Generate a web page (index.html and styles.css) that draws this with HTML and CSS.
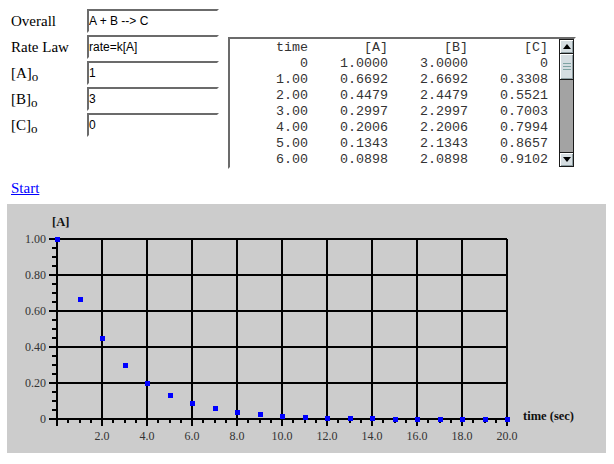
FILE: index.html
```html
<!DOCTYPE html>
<html>
<head>
<meta charset="utf-8">
<title>Kinetics</title>
<link rel="stylesheet" href="styles.css">
</head>
<body>
<div class="top">
  <div class="form">
    <label class="lbl">Overall</label><input class="field" value="A + B --&gt; C">
    <label class="lbl">Rate Law</label><input class="field" value="rate=k[A]">
    <label class="lbl">[A]<sub>o</sub></label><input class="field" value="1">
    <label class="lbl">[B]<sub>o</sub></label><input class="field" value="3">
    <label class="lbl">[C]<sub>o</sub></label><input class="field" value="0">
  </div>
  <div class="results">
    <div class="table">
      <div class="row"><span>time</span><span>[A]</span><span>[B]</span><span>[C]</span></div>
      <div class="row"><span>0</span><span>1.0000</span><span>3.0000</span><span>0</span></div>
      <div class="row"><span>1.00</span><span>0.6692</span><span>2.6692</span><span>0.3308</span></div>
      <div class="row"><span>2.00</span><span>0.4479</span><span>2.4479</span><span>0.5521</span></div>
      <div class="row"><span>3.00</span><span>0.2997</span><span>2.2997</span><span>0.7003</span></div>
      <div class="row"><span>4.00</span><span>0.2006</span><span>2.2006</span><span>0.7994</span></div>
      <div class="row"><span>5.00</span><span>0.1343</span><span>2.1343</span><span>0.8657</span></div>
      <div class="row"><span>6.00</span><span>0.0898</span><span>2.0898</span><span>0.9102</span></div>
    </div>
    <div class="sb">
      <div class="sb-btn up"><span class="tri-up"></span></div>
      <div class="sb-thumb"><span class="grip"></span></div>
      <div class="sb-track"></div>
      <div class="sb-btn down"><span class="tri-down"></span></div>
    </div>
  </div>
</div>
<div class="start"><a href="#">Start</a></div>
<div class="chart">
  <svg width="599" height="249" viewBox="7 204 599 249" xmlns="http://www.w3.org/2000/svg">
    <g stroke="#000" stroke-width="2" fill="none" shape-rendering="crispEdges">
      <path d="M57 239V426M102 239V426M147 239V426M192 239V426M237 239V426M282 239V426M327 239V426M372 239V426M417 239V426M462 239V426M507 239V426"/>
      <path d="M49 239H507M49 275H507M49 311H507M49 347H507M49 383H507M49 419H507"/>
      <path d="M52 248H57M52 257H57M52 266H57M52 284H57M52 293H57M52 302H57M52 320H57M52 329H57M52 338H57M52 356H57M52 365H57M52 374H57M52 392H57M52 401H57M52 410H57"/>
      <path d="M68 419V423M80 419V423M91 419V423M113 419V423M125 419V423M136 419V423M158 419V423M170 419V423M181 419V423M203 419V423M215 419V423M226 419V423M248 419V423M260 419V423M271 419V423M293 419V423M305 419V423M316 419V423M338 419V423M350 419V423M361 419V423M383 419V423M395 419V423M406 419V423M428 419V423M440 419V423M451 419V423M473 419V423M485 419V423M496 419V423"/>
    </g>
    <g fill="#0000ff" shape-rendering="crispEdges">
      <rect x="55" y="237" width="5" height="5"/>
      <rect x="78" y="297" width="5" height="5"/>
      <rect x="100" y="336" width="5" height="5"/>
      <rect x="123" y="363" width="5" height="5"/>
      <rect x="145" y="381" width="5" height="5"/>
      <rect x="168" y="393" width="5" height="5"/>
      <rect x="190" y="401" width="5" height="5"/>
      <rect x="213" y="406" width="5" height="5"/>
      <rect x="235" y="410" width="5" height="5"/>
      <rect x="258" y="412" width="5" height="5"/>
      <rect x="280" y="414" width="5" height="5"/>
      <rect x="303" y="415" width="5" height="5"/>
      <rect x="325" y="416" width="5" height="5"/>
      <rect x="348" y="416" width="5" height="5"/>
      <rect x="370" y="416" width="5" height="5"/>
      <rect x="393" y="417" width="5" height="5"/>
      <rect x="415" y="417" width="5" height="5"/>
      <rect x="438" y="417" width="5" height="5"/>
      <rect x="460" y="417" width="5" height="5"/>
      <rect x="483" y="417" width="5" height="5"/>
      <rect x="505" y="417" width="5" height="5"/>
    </g>
    <g class="tick-lbl" text-anchor="end">
      <text x="46" y="243">1.00</text>
      <text x="46" y="279">0.80</text>
      <text x="46" y="315">0.60</text>
      <text x="46" y="351">0.40</text>
      <text x="46" y="387">0.20</text>
      <text x="46" y="423">0</text>
    </g>
    <g class="tick-lbl" text-anchor="middle">
      <text x="102" y="440">2.0</text>
      <text x="147" y="440">4.0</text>
      <text x="192" y="440">6.0</text>
      <text x="237" y="440">8.0</text>
      <text x="282" y="440">10.0</text>
      <text x="327" y="440">12.0</text>
      <text x="372" y="440">14.0</text>
      <text x="417" y="440">16.0</text>
      <text x="462" y="440">18.0</text>
      <text x="507" y="440">20.0</text>
    </g>
    <text class="axis-title" x="52" y="226">[A]</text>
    <text class="axis-title" x="523" y="420">time (sec)</text>
  </svg>
</div>
</body>
</html>
```
FILE: styles.css
```css
body {
  margin: 0;
  background: #fff;
  color: #000;
  font-family: "Liberation Serif", "Times New Roman", serif;
  font-size: 15px;
}

.top {
  display: flex;
  align-items: flex-start;
  padding: 9px 0 0 11px;
}

.form {
  display: grid;
  grid-template-columns: 76px 132px;
  grid-auto-rows: 24px;
  row-gap: 2px;
  align-items: center;
}

.lbl {
  font-size: 15px;
  line-height: 18px;
}

.lbl sub {
  font-size: 13px;
  line-height: 0;
  vertical-align: -3px;
}

.field {
  box-sizing: border-box;
  width: 132px;
  height: 24px;
  margin: 0;
  padding: 0;
  border: 2px solid;
  border-color: #6b6b6b #fff #fff #6b6b6b;
  background: #fff;
  color: #000;
  font: 12px "Liberation Sans", Arial, sans-serif;
  outline: none;
}

.results {
  box-sizing: border-box;
  display: flex;
  width: 348px;
  height: 132px;
  margin: 28px 0 0 9px;
  border: 2px solid;
  border-color: #6b6b6b #fff #fff #6b6b6b;
}

.table {
  flex: 1;
  padding-top: 1px;
  font-family: "Liberation Mono", "Courier New", monospace;
  font-size: 13.33px;
  line-height: 16px;
  color: #333;
}

.row {
  display: grid;
  grid-template-columns: 78px 80px 80px 80px;
  text-align: right;
  white-space: pre;
}

.sb {
  box-sizing: border-box;
  display: flex;
  flex-direction: column;
  width: 15px;
  background: #a3a3a3;
  border: 1px solid #1a1a1a;
}

.sb-btn {
  box-sizing: border-box;
  height: 14px;
  display: flex;
  align-items: center;
  justify-content: center;
  background: #d5dde1;
  box-shadow: inset 1px 1px #fff, inset -1px -1px #8e9ea2;
}

.sb-btn.up {
  border-bottom: 1px solid #1a1a1a;
}

.sb-btn.down {
  border-top: 1px solid #1a1a1a;
}

.sb-thumb {
  box-sizing: border-box;
  height: 26px;
  display: flex;
  align-items: center;
  justify-content: center;
  background: #d5dde1;
  border-bottom: 1px solid #1a1a1a;
  box-shadow: inset 1px 1px #fff, inset -1px -1px #8e9ea2;
}

.sb-track {
  flex: 1;
}

.grip {
  width: 8px;
  height: 7px;
  background: repeating-linear-gradient(to bottom, #7fa3a3 0 1px, transparent 1px 3px);
}

.tri-up {
  width: 0;
  height: 0;
  border-left: 4px solid transparent;
  border-right: 4px solid transparent;
  border-bottom: 5px solid #000;
}

.tri-down {
  width: 0;
  height: 0;
  border-left: 4px solid transparent;
  border-right: 4px solid transparent;
  border-top: 5px solid #000;
}

.start {
  margin: 10px 0 0 11px;
  line-height: 18px;
  font-size: 15px;
}

.start a {
  color: #0000ff;
}

.chart {
  width: 599px;
  height: 249px;
  margin: 7px 0 0 7px;
  background: #cccccc;
}

.chart svg {
  display: block;
}

.tick-lbl {
  font-family: "Liberation Serif", "Times New Roman", serif;
  font-size: 12px;
  fill: #333;
}

.axis-title {
  font-family: "Liberation Serif", "Times New Roman", serif;
  font-size: 12.5px;
  font-weight: bold;
  fill: #111;
}
```
